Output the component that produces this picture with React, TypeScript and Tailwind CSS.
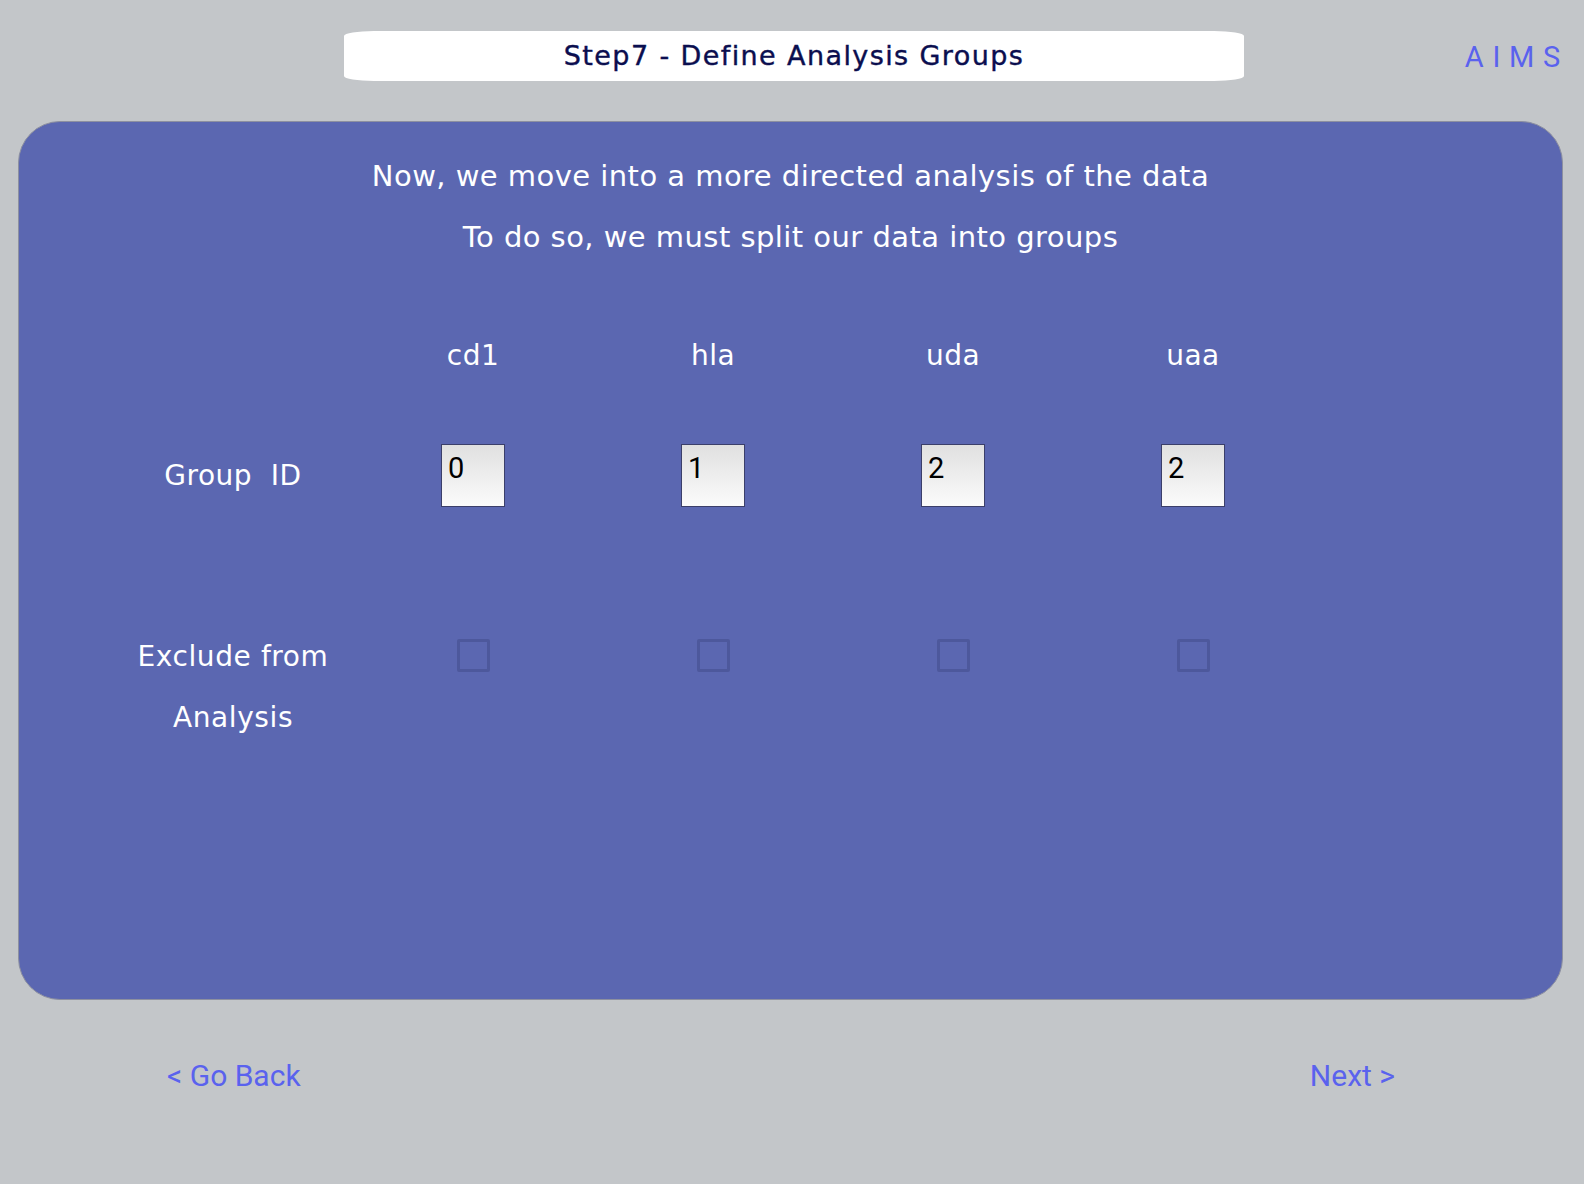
import { useState } from 'react'

const groups = [
  { name: 'cd1', id: '0' },
  { name: 'hla', id: '1' },
  { name: 'uda', id: '2' },
  { name: 'uaa', id: '2' },
]

export default function App() {
  const [excluded, setExcluded] = useState<boolean[]>([false, false, false, false])

  const toggle = (i: number) =>
    setExcluded(prev => prev.map((v, j) => (j === i ? !v : v)))

  return (
    <div className="min-h-screen w-full bg-[#c3c6c9] font-['DejaVu_Sans',sans-serif]">
      {/* Header */}
      <div className="flex items-start pt-[31px]">
        <div className="w-[344px] shrink-0" />
        <div className="flex h-[50px] w-[900px] shrink-0 items-center justify-center rounded-[30px/5px] bg-white">
          <h1 className="text-[27px] tracking-[1.4px] text-[#0b0e4f] [-webkit-text-stroke:0.4px_#0b0e4f]">Step7 - Define Analysis Groups</h1>
        </div>
        <div className="flex flex-1 justify-end pr-[15px] pt-[6px]">
          <span className="font-['Roboto',sans-serif] text-[29px] leading-[40px] tracking-[0.3em] text-[#5a62ee]">AIMS</span>
        </div>
      </div>

      {/* Main panel */}
      <div className="ml-[18px] mt-[40px] h-[879px] w-[1545px] rounded-[42px] border border-[#8d90a0] bg-[#5b67b1] text-white">
        <div className="pt-[24px] text-center text-[29px] leading-[60.5px] tracking-[0.45px]">
          <p>Now, we move into a more directed analysis of the data</p>
          <p>To do so, we must split our data into groups</p>
        </div>

        <div className="ml-[94px] mt-[59px]">
          {/* Column names */}
          <div className="grid h-[60px] grid-cols-[repeat(5,240px)] items-center text-center text-[28px] tracking-[0.5px]">
            <div />
            {groups.map(g => (
              <div key={g.name}>{g.name}</div>
            ))}
          </div>

          {/* Group ID */}
          <div className="mt-[58px] grid h-[63px] grid-cols-[repeat(5,240px)] items-center">
            <div className="text-center text-[28px] tracking-[0.5px]">Group&nbsp; ID</div>
            {groups.map(g => (
              <div key={g.name} className="flex justify-center">
                <input
                  defaultValue={g.id}
                  className="box-border h-[63px] w-[64px] border border-[#3b3f6a] bg-gradient-to-b from-[#e0e0e0] to-[#fbfbfb] pl-[6px] pt-[8px] pb-[24px] font-['Roboto',sans-serif] text-[29px] leading-[29px] text-black outline-none"
                />
              </div>
            ))}
          </div>

          {/* Exclude */}
          <div className="mt-[120px] grid grid-cols-[repeat(5,240px)] items-start">
            <div className="text-center text-[28px] leading-[60.5px] tracking-[0.6px]">
              Exclude from
              <br />
              Analysis
            </div>
            {groups.map((g, i) => (
              <div key={g.name} className="flex justify-center pt-[12px]">
                <button
                  onClick={() => toggle(i)}
                  className="h-[33px] w-[33px] rounded-[2px] border-[3px] border-[#4d589c]"
                >
                  {excluded[i] && <span className="block h-full w-full bg-[#4d589c]" />}
                </button>
              </div>
            ))}
          </div>
        </div>
      </div>

      {/* Navigation */}
      <div className="flex items-center justify-between pl-[167px] pr-[189px] pt-[56px] font-['Roboto',sans-serif] text-[30px] leading-[40px] text-[#5a62ee]">
        <button>&lt; Go Back</button>
        <button>Next &gt;</button>
      </div>
    </div>
  )
}
